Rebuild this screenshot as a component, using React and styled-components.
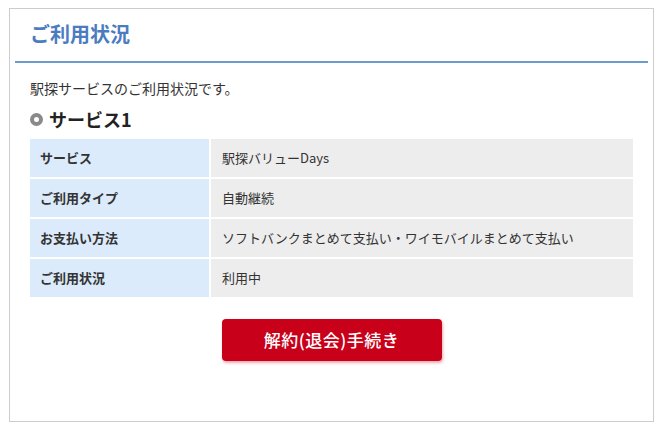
import React from 'react'
import styled, { createGlobalStyle } from 'styled-components'

const GlobalStyle = createGlobalStyle`
  body {
    margin: 0;
    background: #fff;
    font-family: 'Noto Sans CJK JP', 'Noto Sans', sans-serif;
    color: #333;
  }
`

const Page = styled.div`
  padding: 8px 10px 0 9px;
  width: 664px;
  box-sizing: border-box;
`

const Box = styled.section`
  width: 645px;
  height: 414px;
  box-sizing: border-box;
  border: 1px solid #cccccc;
  background: #fff;
`

const Header = styled.div`
  margin: 0 5px;
  height: 49px;
  display: flex;
  align-items: center;
  padding: 0 0 3px 15px;
  border-bottom: 2px solid #6a9bcc;
`

const Title = styled.h1`
  margin: 0;
  font-size: 20px;
  font-weight: bold;
  color: #4b7cbf;
`

const Body = styled.div`
  padding: 15px 20px 0 20px;
`

const Intro = styled.p`
  margin: 0;
  font-size: 14px;
  line-height: 20px;
  color: #333;
`

const Heading = styled.h2`
  margin: 9px 0 8px;
  display: flex;
  align-items: center;
  gap: 6px;
  font-size: 18px;
  line-height: 24px;
  font-weight: bold;
  color: #222;
`

const Ring = styled.span`
  width: 13px;
  height: 13px;
  box-sizing: border-box;
  border-radius: 50%;
  border: 4px solid #8a8a8a;
  background: #fff;
`

const Table = styled.div`
  display: grid;
  grid-template-columns: 179px 1fr;
  grid-auto-rows: 38px;
  gap: 2px;
`

const Cell = styled.div`
  display: flex;
  align-items: center;
  box-sizing: border-box;
  padding-bottom: 2px;
  font-size: 13px;
  background: ${p => (p.$head ? '#dcebfc' : '#ededed')};
  font-weight: ${p => (p.$head ? 'bold' : 'normal')};
  padding-left: ${p => (p.$head ? '10px' : '11px')};
  color: #333;
`

const Actions = styled.div`
  display: flex;
  justify-content: center;
  margin-top: 22px;
`

const Button = styled.button`
  width: 220px;
  height: 42px;
  padding: 0 0 2px;
  border: 0;
  border-radius: 4px;
  background: #c9001a;
  color: #fff;
  font: inherit;
  font-size: 17px;
  font-weight: 500;
  letter-spacing: 0.5px;
  box-shadow: 1px 2px 3px rgba(200, 0, 26, 0.35);
  cursor: pointer;
`

const rows = [
  ['サービス', '駅探バリューDays'],
  ['ご利用タイプ', '自動継続'],
  ['お支払い方法', 'ソフトバンクまとめて支払い・ワイモバイルまとめて支払い'],
  ['ご利用状況', '利用中'],
]

export default function App() {
  return (
    <Page>
      <GlobalStyle />
      <Box>
        <Header>
          <Title>ご利用状況</Title>
        </Header>
        <Body>
          <Intro>駅探サービスのご利用状況です。</Intro>
          <Heading>
            <Ring />
            サービス1
          </Heading>
          <Table>
            {rows.map(([k, v]) => (
              <React.Fragment key={k}>
                <Cell $head>{k}</Cell>
                <Cell>{v}</Cell>
              </React.Fragment>
            ))}
          </Table>
          <Actions>
            <Button>解約(退会)手続き</Button>
          </Actions>
        </Body>
      </Box>
    </Page>
  )
}
